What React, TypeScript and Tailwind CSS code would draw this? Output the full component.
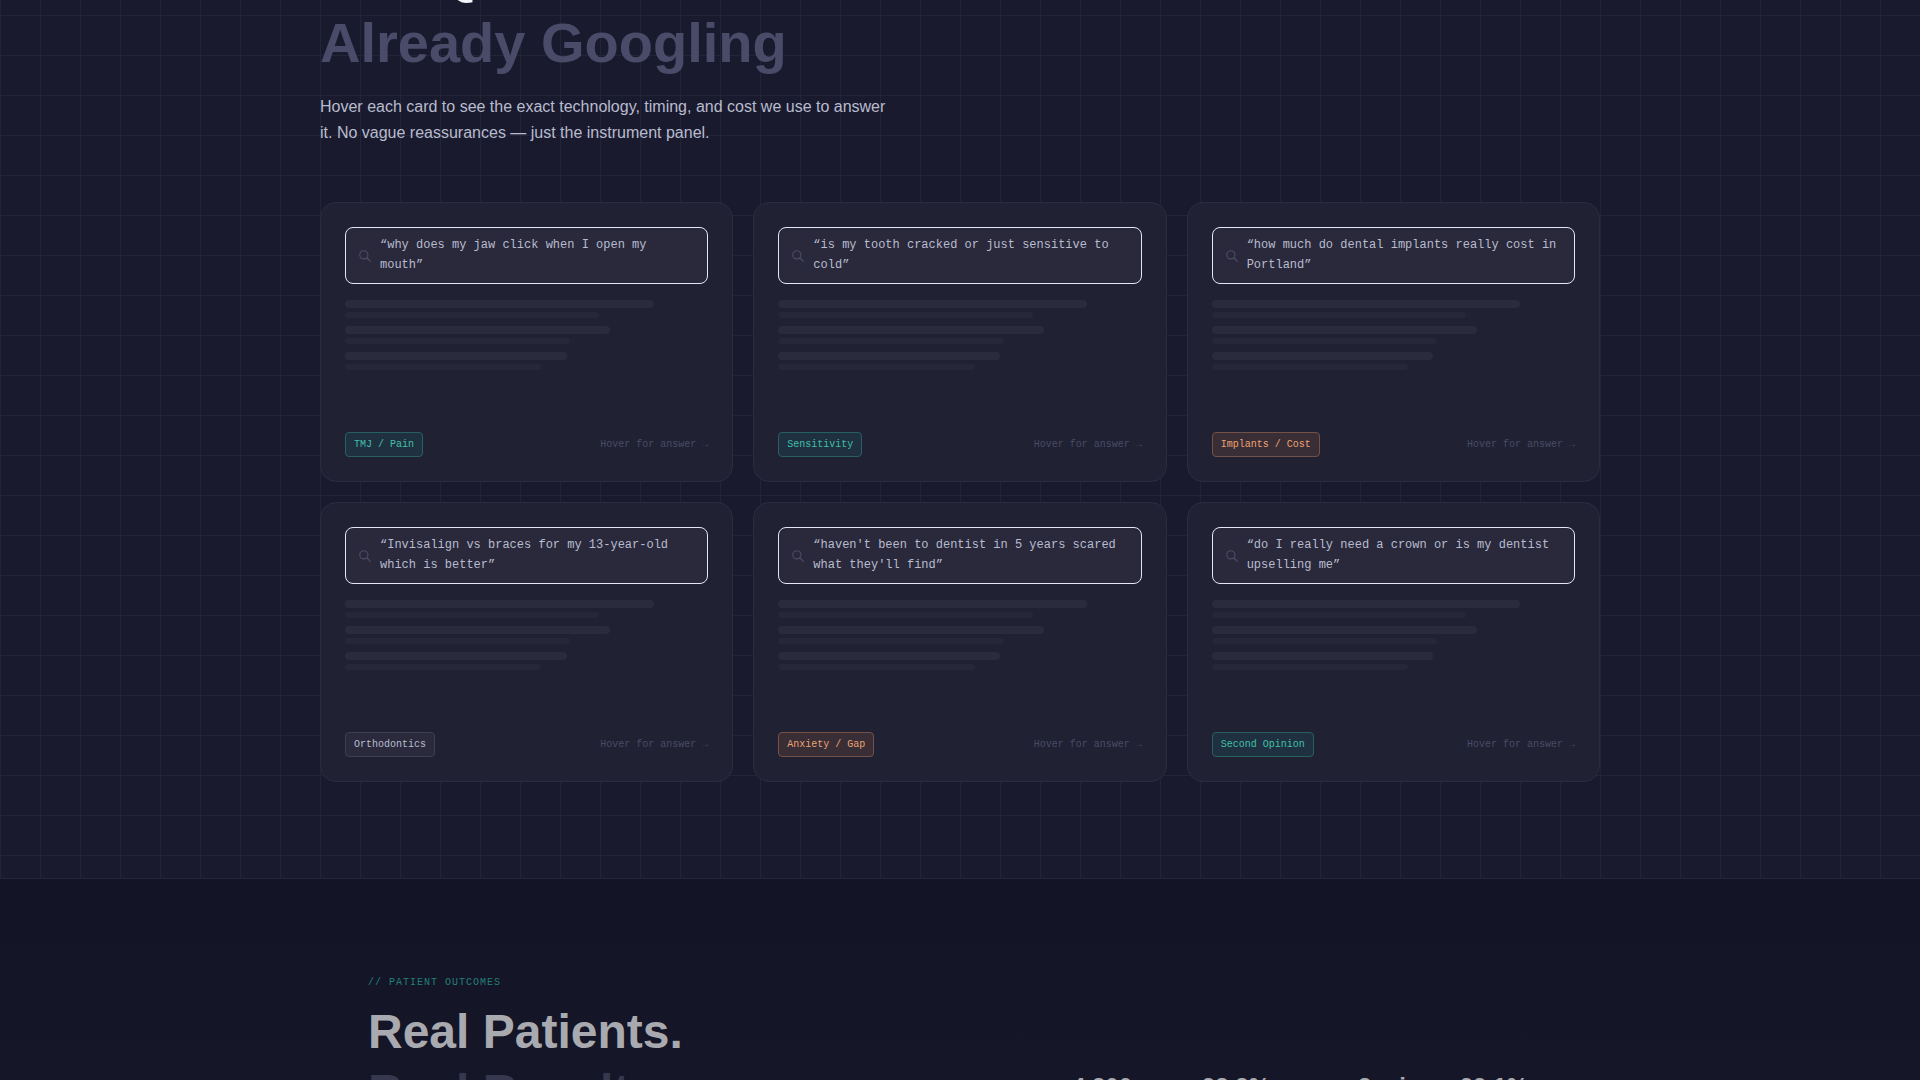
import React from 'react';
import clsx from 'clsx';

type Tone = 'teal' | 'orange' | 'neutral';

type Question = {
  query: string;
  tag: string;
  tone: Tone;
};

const questions: Question[] = [
  { query: 'why does my jaw click when I open my mouth', tag: 'TMJ / Pain', tone: 'teal' },
  { query: 'is my tooth cracked or just sensitive to cold', tag: 'Sensitivity', tone: 'teal' },
  { query: 'how much do dental implants really cost in Portland', tag: 'Implants / Cost', tone: 'orange' },
  { query: 'Invisalign vs braces for my 13-year-old which is better', tag: 'Orthodontics', tone: 'neutral' },
  { query: "haven't been to dentist in 5 years scared what they'll find", tag: 'Anxiety / Gap', tone: 'orange' },
  { query: 'do I really need a crown or is my dentist upselling me', tag: 'Second Opinion', tone: 'teal' },
];

const tones: Record<Tone, string> = {
  teal: 'bg-[#1f3040] border-[#28605f] text-[#40c0a9]',
  orange: 'bg-[#392d36] border-[#745146] text-[#eba373]',
  neutral: 'bg-[#2a2a3c] border-[#3e3f52] text-[#b8bccf]',
};

// title bar + description bar of each fake search result
const skeleton = [
  ['w-[85%]', 'w-[70%]'],
  ['w-[73%]', 'w-[62%]'],
  ['w-[61%]', 'w-[54%]'],
];

const stats = [
  { value: '4,200', width: 'w-[130px]' },
  { value: '98.2%', width: 'w-[156px]' },
  { value: '2 min', width: 'w-[102px]' },
  { value: '99.1%', width: 'w-[92px]' },
];

const mono = "font-['Liberation_Mono',monospace]";

const SearchIcon: React.FC = () => (
  <svg className="size-3.5 shrink-0 text-[#4a4b66]" viewBox="0 0 24 24" fill="none" stroke="currentColor" strokeWidth={2}>
    <path strokeLinecap="round" strokeLinejoin="round" d="M21 21l-6-6m2-5a7 7 0 11-14 0 7 7 0 0114 0z" />
  </svg>
);

const QuestionCard: React.FC<{ item: Question }> = ({ item }) => {
  return (
    <article className="flex flex-col min-h-[280px] rounded-2xl border border-[#2b2c3e] bg-[#202133] p-6">
      <div className="flex items-center gap-2 rounded-lg border border-[#e4e6f6] bg-[#2a293b] px-3 py-2">
        <SearchIcon />
        <p className={clsx(mono, 'text-xs leading-relaxed text-[#b8bccf]')}>{`“${item.query}”`}</p>
      </div>
      <div className="mt-4 space-y-2">
        {skeleton.map(([title, desc]) => (
          <div key={title} className="space-y-1">
            <div className={clsx('h-2 rounded-sm bg-[#2a2b3d]', title)} />
            <div className={clsx('h-1.5 rounded-sm bg-[#262738]', desc)} />
          </div>
        ))}
      </div>
      <div className={clsx(mono, 'mt-auto flex items-center justify-between text-[10px] leading-[15px]')}>
        <span className={clsx('rounded-sm border px-2 py-1', tones[item.tone])}>{item.tag}</span>
        <span className="text-[#4a4b66]">Hover for answer →</span>
      </div>
    </article>
  );
};

const App: React.FC = () => {
  return (
    <div className="h-screen overflow-hidden bg-[#131425] font-['Liberation_Sans',sans-serif]">
      <main className="-mt-[185px]">
        <section className="bg-[#1a1a2e] bg-[linear-gradient(#232437_1px,transparent_1px),linear-gradient(90deg,#232437_1px,transparent_1px)] bg-[size:40px_40px] pt-[123px] pb-24">
          <div className="mx-auto max-w-7xl">
            <h2 className="text-[56px] leading-tight font-bold text-[#f5f6fc]">
              The Questions You're
              <br />
              <span className="text-[#4a4b68]">Already Googling</span>
            </h2>
            <p className="mt-4 max-w-xl text-base leading-relaxed text-[#b8bccf]">
              Hover each card to see the exact technology, timing, and cost we use to answer it. No vague
              reassurances — just the instrument panel.
            </p>
            <div className="mt-14 grid grid-cols-3 gap-5">
              {questions.map((item) => (
                <QuestionCard key={item.tag} item={item} />
              ))}
            </div>
          </div>
        </section>

        <section className="border-t border-[#242538] bg-linear-to-b from-[#131425] to-[#161729] py-24">
          <div className="mx-auto flex max-w-7xl items-end justify-between px-12">
            <div>
              <p className={clsx(mono, 'text-[10px] leading-[15px] tracking-widest uppercase text-[#238077]')}>
                // Patient Outcomes
              </p>
              <h2 className="mt-3 text-5xl leading-tight font-bold text-[#a9aab0]">
                Real Patients.
                <br />
                <span className="text-[#37384f]">Real Results.</span>
              </h2>
            </div>
            <div className="flex pb-[19px] text-2xl font-bold text-[#a9aab0]">
              {stats.map((stat) => (
                <div key={stat.value} className={stat.width}>
                  {stat.value}
                </div>
              ))}
            </div>
          </div>
        </section>
      </main>
    </div>
  );
};

export default App;
